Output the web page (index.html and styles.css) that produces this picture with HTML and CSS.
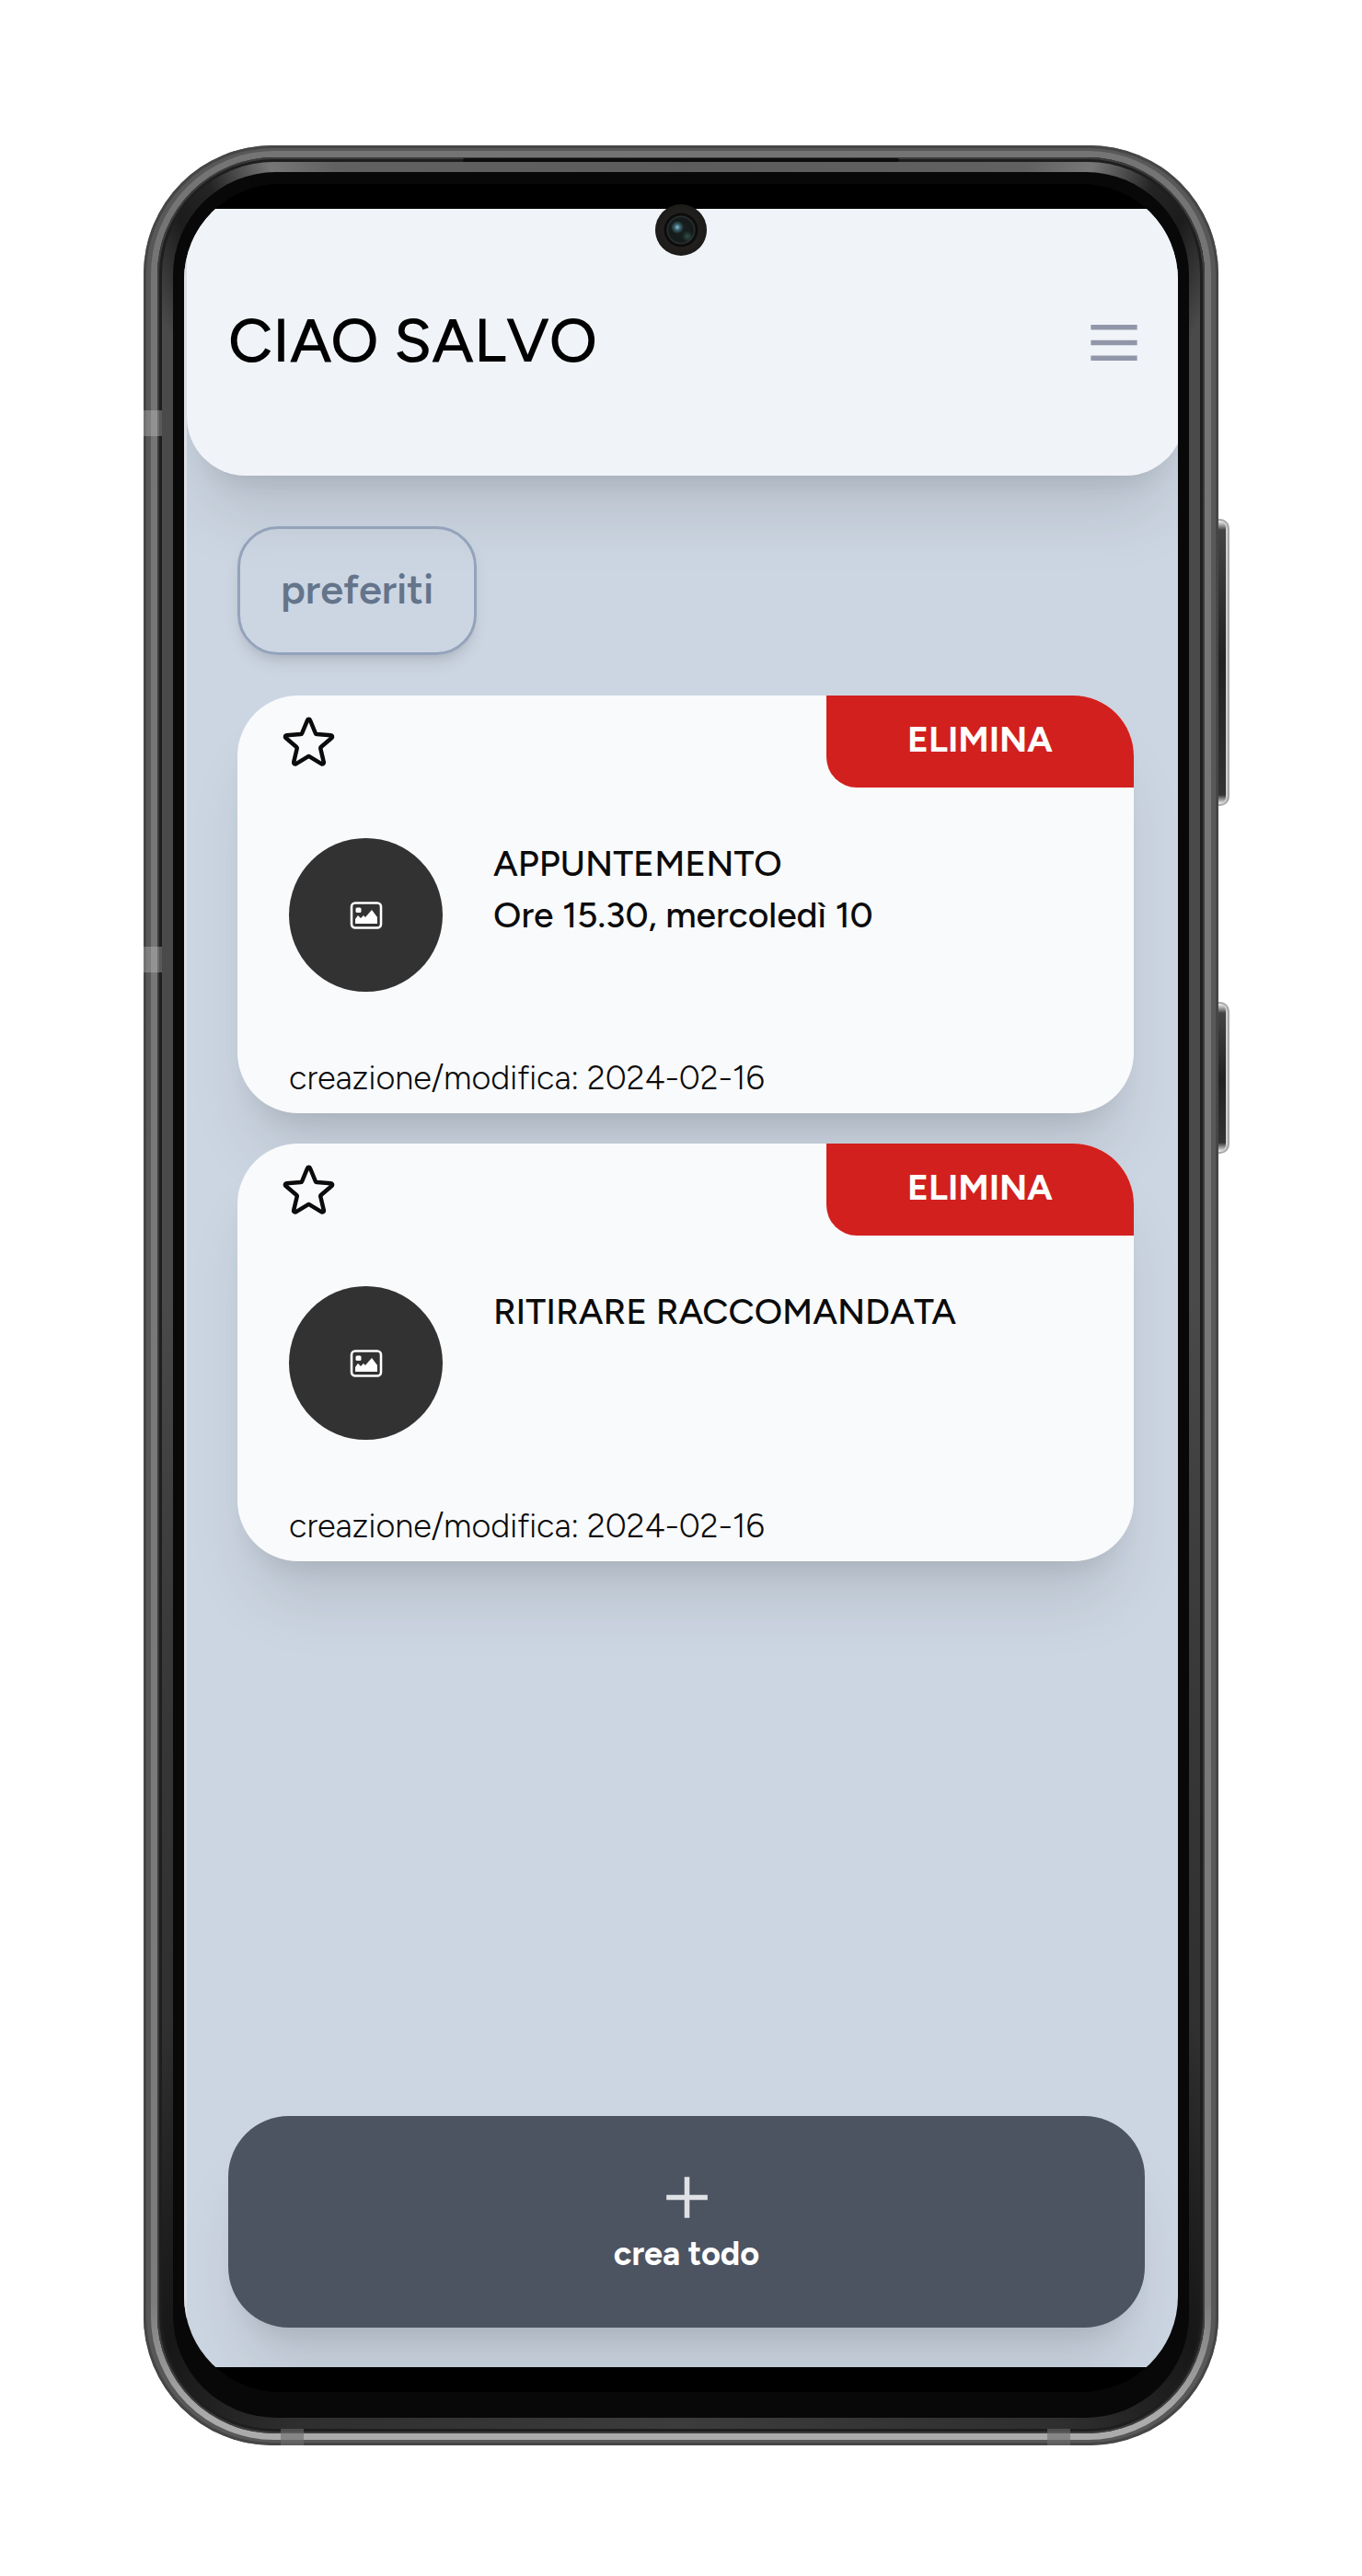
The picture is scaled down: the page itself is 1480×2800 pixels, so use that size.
FILE: index.html
```html
<!DOCTYPE html>
<html lang="it">
<head>
<meta charset="utf-8">
<meta name="viewport" content="width=device-width, initial-scale=1">
<title>Ciao Salvo</title>
<link rel="stylesheet" href="styles.css">
</head>
<body>
<svg class="sprite" aria-hidden="true">
  <symbol id="star" viewBox="0 0 24 24">
    <path fill="none" stroke="currentColor" stroke-width="1.6" stroke-linecap="round" stroke-linejoin="round" d="M11.48 3.499a.562.562 0 0 1 1.04 0l2.125 5.111a.563.563 0 0 0 .475.345l5.518.442c.499.04.701.663.321.988l-4.204 3.602a.563.563 0 0 0-.182.557l1.285 5.385a.562.562 0 0 1-.84.61l-4.725-2.885a.562.562 0 0 0-.586 0L6.982 20.54a.562.562 0 0 1-.84-.61l1.285-5.386a.562.562 0 0 0-.182-.557l-4.204-3.602a.562.562 0 0 1 .321-.988l5.518-.442a.563.563 0 0 0 .475-.345L11.48 3.5Z"/>
  </symbol>
  <symbol id="picture" viewBox="0 0 36 30">
    <rect x="2" y="1.5" width="32" height="27" rx="4" fill="none" stroke="currentColor" stroke-width="2.6"/>
    <rect x="6.5" y="6.5" width="6" height="5.5" rx="1.5" fill="currentColor"/>
    <path fill="currentColor" d="M6 24v-5l3-4 3 3 3-3 2 2 7-8 6 8v7z"/>
  </symbol>
</svg>

<div class="phone">
  <span class="side-key side-key-volume"></span>
  <span class="side-key side-key-power"></span>
  <span class="antenna antenna-upper"></span>
  <span class="antenna antenna-lower"></span>
  <span class="antenna-foot antenna-foot-left"></span>
  <span class="antenna-foot antenna-foot-right"></span>
  <div class="rim-light">
    <div class="rim-dark">
      <span class="earpiece"></span>
      <div class="band">
        <div class="bezel">
          <div class="screen">
            <span class="camera"></span>
            <div class="app">
              <header class="top-bar">
                <h1 class="greeting">CIAO SALVO</h1>
                <button class="icon-button menu-button" type="button" aria-label="Menu">
                  <svg class="icon" viewBox="0 0 24 24" aria-hidden="true"><path fill="none" stroke="currentColor" stroke-width="2" d="M3 6h18M3 12h18M3 18h18"/></svg>
                </button>
              </header>

              <main class="content">
                <button class="filter" type="button">preferiti</button>
                <ul class="todos">
                  <li class="card">
                    <div class="card-actions">
                      <button class="icon-button" type="button" aria-label="Preferito"><svg class="icon" aria-hidden="true"><use href="#star"/></svg></button>
                      <button class="delete" type="button">ELIMINA</button>
                    </div>
                    <div class="card-body">
                      <div class="avatar"><svg class="avatar-icon" aria-hidden="true"><use href="#picture"/></svg></div>
                      <div class="card-text">
                        <h2 class="card-title">APPUNTEMENTO</h2>
                        <p class="card-note">Ore 15.30, mercoledì 10</p>
                      </div>
                    </div>
                    <p class="card-date">creazione/modifica: 2024-02-16</p>
                  </li>
                  <li class="card">
                    <div class="card-actions">
                      <button class="icon-button" type="button" aria-label="Preferito"><svg class="icon" aria-hidden="true"><use href="#star"/></svg></button>
                      <button class="delete" type="button">ELIMINA</button>
                    </div>
                    <div class="card-body">
                      <div class="avatar"><svg class="avatar-icon" aria-hidden="true"><use href="#picture"/></svg></div>
                      <div class="card-text">
                        <h2 class="card-title">RITIRARE RACCOMANDATA</h2>
                      </div>
                    </div>
                    <p class="card-date">creazione/modifica: 2024-02-16</p>
                  </li>
                </ul>
              </main>

              <button class="create" type="button">
                <svg class="icon create-icon" viewBox="0 0 24 24" aria-hidden="true"><path fill="none" stroke="currentColor" stroke-width="2" d="M12 4v16M4 12h16"/></svg>
                crea todo
              </button>
            </div>
          </div>
        </div>
      </div>
    </div>
  </div>
</div>
</body>
</html>
```
FILE: styles.css
```css
*, *::before, *::after { box-sizing: border-box; }

body {
  margin: 0;
  padding: 158px 16px 142px;
  background: #fff;
  color: #0b0b0b;
  font-family: Figtree, Lato, "Open Sans", sans-serif;
  font-size: 39px;
  line-height: 56px;
}

h1, h2, p, ul { margin: 0; padding: 0; }
ul { list-style: none; }
button { font: inherit; color: inherit; border: 0; padding: 0; background: none; cursor: pointer; }
.sprite { display: none; }

/* Phone shell: nested rings, from the outside in */
.phone, .rim-light, .rim-dark, .band, .bezel { display: flex; flex-direction: column; }
.rim-light, .rim-dark, .band, .bezel, .screen { flex: 1; }

.phone {
  position: relative;
  max-width: 1168px;
  aspect-ratio: 1168 / 2500;
  margin: 0 auto;
  padding: 6px 8px;
  border-radius: 140px;
  background: #585858;
  box-shadow: inset 0 0 0 3px #464646;
}
.rim-light {
  padding: 7px;
  border-radius: 134px;
  background: linear-gradient(#747474 0, #7c7c7c 94%, #ababab 99%);
}
.rim-dark {
  position: relative;
  padding: 5px;
  border-radius: 127px;
  background: #1e1e1e;
  box-shadow: inset 0 0 0 2px #3c3c3c;
}
.band {
  padding: 11px 12px 12px;
  border-radius: 122px;
  background: conic-gradient(#5c5c5c 0deg, #616161 17deg, #777 20deg, #242424 23deg, #1c1c1c 25deg, #4a4a4a 28deg,
    #4a4a4a 90deg, #303030 145deg, #171717 154deg, #2e2e2e 161deg, #3c3c3c 180deg, #2e2e2e 199deg, #171717 206deg,
    #303030 215deg, #4a4a4a 270deg, #4a4a4a 332deg, #1c1c1c 335deg, #242424 337deg, #777 340deg, #616161 343deg, #5c5c5c 360deg);
}
.bezel {
  padding: 13px 12px 28px;
  border-radius: 112px;
  background: #080808;
}

.side-key {
  position: absolute;
  left: 100%;
  width: 12px;
  border: 2px solid #a9a9a9;
  border-left: 0;
  border-radius: 0 10px 10px 0;
  background: linear-gradient(#f4f4f4, #444 10px, #222 50%, #333 calc(100% - 10px), #f4f4f4);
  box-shadow: inset -2px 0 0 #d0d0d0;
}
.side-key-volume { top: 406px; height: 312px; }
.side-key-power { top: 931px; height: 165px; }

.antenna { position: absolute; left: 0; width: 20px; height: 28px; z-index: 1; background: rgba(200, 200, 200, .35); }
.antenna-upper { top: 288px; }
.antenna-lower { top: 871px; }
.antenna-foot { position: absolute; bottom: 0; width: 25px; height: 18px; z-index: 1; background: rgba(110, 110, 110, .6); }
.antenna-foot-left { left: 149px; }
.antenna-foot-right { right: 161px; }
.earpiece { position: absolute; top: 1px; left: 50%; width: 474px; height: 4px; margin-left: -237px; border-radius: 2px; background: #0c0c0c; }

.screen {
  position: relative;
  display: flex;
  padding: 27px 0;
  border-radius: 104px;
  background: #000;
  overflow: hidden;
}
.camera {
  position: absolute;
  z-index: 2;
  top: 22px;
  left: 50%;
  width: 56px;
  height: 56px;
  margin-left: -28px;
  border-radius: 50%;
  background:
    radial-gradient(circle at 24px 25px, #8fc3d3 0, rgba(70, 120, 135, .8) 3px, transparent 7px),
    radial-gradient(circle at 35px 35px, #2f5148 0, transparent 6px),
    radial-gradient(circle, #17211f 0, #151a1a 13px, #2b3030 15px, #0b0b0b 16px, #0e0d0c 18px, #22201e 19px, #1c1b19 28px);
}

/* App */
.app {
  flex: 1;
  display: flex;
  flex-direction: column;
  margin-right: -7px;
  border-left: 3px solid #dcdfe5;
  background: #ccd6e2;
  overflow: hidden;
}
.top-bar {
  display: flex;
  align-items: center;
  justify-content: space-between;
  height: 290px;
  padding: 0 43px 0 45px;
  border-radius: 0 0 64px 64px;
  background: #f0f4f9;
}
.top-bar, .card, .create {
  box-shadow: 0 56px 70px -14px rgba(0, 0, 0, .1), 0 22px 28px -17px rgba(0, 0, 0, .1);
}
.greeting { padding-bottom: 4px; font-size: 67px; line-height: 92px; font-weight: 500; color: #000; }

.icon-button { display: flex; }
.icon { width: 67px; height: 67px; }
.menu-button { color: #9296a9; }

.content { padding: 55px; }
.filter {
  display: block;
  height: 140px;
  padding: 0 44px 4px;
  margin-bottom: 44px;
  border: 3px solid #94a3bb;
  border-radius: 44px;
  color: #64748b;
  font-size: 45px;
  font-weight: 600;
  box-shadow: 0 11px 17px -3px rgba(0, 0, 0, .1), 0 6px 11px -6px rgba(0, 0, 0, .1);
}

.todos { display: grid; gap: 33px; }
.card {
  padding-bottom: 10px;
  border-radius: 66px;
  background: #f9fafc;
  overflow: hidden;
}
.card-actions {
  display: flex;
  align-items: center;
  justify-content: space-between;
  padding-left: 44px;
}
.delete {
  width: 334px;
  height: 100px;
  padding-bottom: 4px;
  border-radius: 0 0 0 33px;
  background: #d2201e;
  color: #fff;
  font-weight: 700;
}
.card-body { display: flex; gap: 55px; padding: 55px 56px 66px; }
.avatar {
  display: grid;
  place-items: center;
  flex: none;
  width: 167px;
  height: 167px;
  border-radius: 50%;
  background: #323232;
  color: #fff;
}
.avatar-icon { width: 36px; height: 30px; }
.card-title, .card-note { font-size: 39px; line-height: 56px; font-weight: 500; }
.card-date { padding: 0 56px; font-size: 36px; font-weight: 300; color: #0b0b0b; }

.create {
  display: flex;
  flex-direction: column;
  align-items: center;
  justify-content: center;
  height: 230px;
  margin: auto 43px 43px 45px;
  padding-top: 2px;
  border-radius: 66px;
  background: #4c5462;
  color: #fff;
  font-size: 36px;
  font-weight: 700;
}
.create-icon { color: #dfe1e5; }
```
